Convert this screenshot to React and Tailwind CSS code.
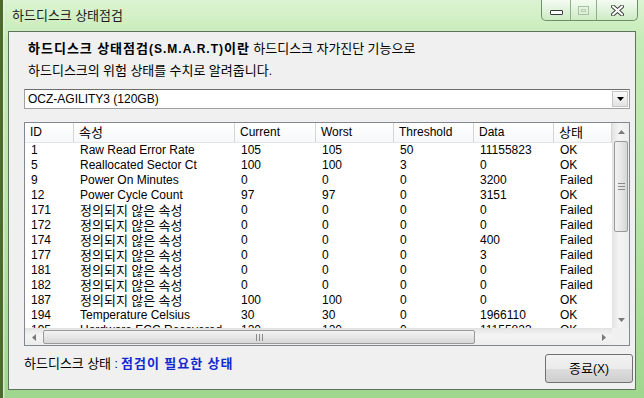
import React from 'react';

// hangul runs a size up, Noto CJK draws them smaller than Gulim does
const ko = (s) =>
    s.split(/([\uAC00-\uD7A3]+)/).map((p, i) =>
        /[\uAC00-\uD7A3]/.test(p) ? (
            <span key={i} className="text-[13px]">
                {p}
            </span>
        ) : (
            p
        )
    );

const columns = [
    { label: 'ID', w: 'w-[49px]' },
    { label: '속성', w: 'w-[161px]' },
    { label: 'Current', w: 'w-[81px]' },
    { label: 'Worst', w: 'w-[78px]' },
    { label: 'Threshold', w: 'w-[80px]' },
    { label: 'Data', w: 'w-[80px]' },
    { label: '상태', w: 'w-[58px]' },
];

const UNDEF = '정의되지 않은 속성';

const rows = [
    ['1', 'Raw Read Error Rate', '105', '105', '50', '11155823', 'OK'],
    ['5', 'Reallocated Sector Ct', '100', '100', '3', '0', 'OK'],
    ['9', 'Power On Minutes', '0', '0', '0', '3200', 'Failed'],
    ['12', 'Power Cycle Count', '97', '97', '0', '3151', 'OK'],
    ['171', UNDEF, '0', '0', '0', '0', 'Failed'],
    ['172', UNDEF, '0', '0', '0', '0', 'Failed'],
    ['174', UNDEF, '0', '0', '0', '400', 'Failed'],
    ['177', UNDEF, '0', '0', '0', '3', 'Failed'],
    ['181', UNDEF, '0', '0', '0', '0', 'Failed'],
    ['182', UNDEF, '0', '0', '0', '0', 'Failed'],
    ['187', UNDEF, '100', '100', '0', '0', 'OK'],
    ['194', 'Temperature Celsius', '30', '30', '0', '1966110', 'OK'],
    ['195', 'Hardware ECC Recovered', '120', '120', '0', '11155823', 'OK'],
];

function Arrow({ dir, className = '' }) {
    const pts = {
        up: '0,4 3.5,0 7,4',
        down: '0,0 7,0 3.5,4',
        left: '4,0 4,7 0,3.5',
        right: '0,0 0,7 4,3.5',
    }[dir];
    const vertical = dir === 'up' || dir === 'down';
    return (
        <svg
            width={vertical ? 7 : 4}
            height={vertical ? 4 : 7}
            className={className}
        >
            <polygon points={pts} fill="currentColor" />
        </svg>
    );
}

function TitleButtons() {
    return (
        <div className="flex h-[21px] -mr-[2px] rounded-b-[5px] border border-t-0 border-[#6f8f6a] bg-[linear-gradient(#f4fbf2,#cdebc4)] overflow-hidden">
            <div className="w-[29px] flex items-center justify-center border-r border-[#8fae8a]">
                <div className="w-[13px] h-[5px] mt-[4px] bg-white border border-[#3c3c3c] rounded-[1px]" />
            </div>
            <div className="w-[26px] flex items-center justify-center border-r border-[#8fae8a]">
                <div className="w-[11px] h-[9px] border border-[#a9bfa6] flex items-center justify-center">
                    <div className="w-[5px] h-[3px] border border-[#b9cdb6]" />
                </div>
            </div>
            <div className="w-[40px] flex items-center justify-center">
                <svg width="13" height="11" viewBox="0 0 13 11">
                    <path
                        d="M2 1.5 L11 9.5 M11 1.5 L2 9.5"
                        stroke="#3a3a3a"
                        strokeWidth="4"
                        strokeLinecap="round"
                    />
                    <path
                        d="M2 1.5 L11 9.5 M11 1.5 L2 9.5"
                        stroke="#ffffff"
                        strokeWidth="2.2"
                        strokeLinecap="round"
                    />
                </svg>
            </div>
        </div>
    );
}

function VScroll() {
    return (
        <div className="w-[17px] h-[205px] flex flex-col bg-[linear-gradient(90deg,#e6e6e6,#f4f4f4_40%,#ececec)] border-l border-[#e2e2e2]">
            <div className="h-[17px] flex items-center justify-center text-[#7a7a7a]">
                <Arrow dir="up" />
            </div>
            <div className="mt-[1px] mx-[1px] h-[91px] rounded-[2px] border border-[#9a9a9a] bg-[linear-gradient(90deg,#f3f3f3,#e6e6e6_50%,#d6d6d6)] flex items-center justify-center">
                <div className="flex flex-col gap-[2px]">
                    <div className="w-[7px] h-px bg-[#8a8a8a]" />
                    <div className="w-[7px] h-px bg-[#8a8a8a]" />
                    <div className="w-[7px] h-px bg-[#8a8a8a]" />
                </div>
            </div>
            <div className="flex-1" />
            <div className="h-[17px] flex items-center justify-center text-[#7a7a7a]">
                <Arrow dir="down" />
            </div>
        </div>
    );
}

function HScroll() {
    return (
        <div className="h-[17px] flex bg-[linear-gradient(#e6e6e6,#f4f4f4_40%,#ececec)] border-t border-[#e2e2e2]">
            <div className="w-[17px] flex items-center justify-center text-[#7a7a7a]">
                <Arrow dir="left" />
            </div>
            <div className="my-[1px] ml-[1px] w-[432px] rounded-[2px] border border-[#9a9a9a] bg-[linear-gradient(#f3f3f3,#e6e6e6_50%,#d6d6d6)] flex items-center justify-center">
                <div className="flex gap-[2px]">
                    <div className="w-px h-[7px] bg-[#8a8a8a]" />
                    <div className="w-px h-[7px] bg-[#8a8a8a]" />
                    <div className="w-px h-[7px] bg-[#8a8a8a]" />
                </div>
            </div>
            <div className="flex-1" />
            <div className="w-[17px] flex items-center justify-center text-[#7a7a7a]">
                <Arrow dir="right" />
            </div>
        </div>
    );
}

function SmartTable() {
    return (
        <div className="mt-[13px] border border-[#828790] bg-white flex">
            <div className="w-[587px] flex flex-col">
                <div className="h-[20px] flex bg-[linear-gradient(#ffffff,#f7f8fa)] border-b border-[#e5e5e5]">
                    {columns.map((c) => (
                        <div
                            key={c.label}
                            className={`${c.w} shrink-0 border-r border-[#d5d5d5] pl-[5px] flex items-center leading-[15px]`}
                        >
                            {ko(c.label)}
                        </div>
                    ))}
                </div>
                <div className="h-[185px] overflow-hidden">
                    {rows.map((r) => (
                        <div key={r[0]} className="h-[15px] flex items-center leading-[15px]">
                            {r.map((cell, i) => (
                                <div
                                    key={i}
                                    className={`${columns[i].w} shrink-0 pl-[6px] whitespace-nowrap overflow-hidden`}
                                >
                                    {ko(cell)}
                                </div>
                            ))}
                        </div>
                    ))}
                </div>
                <HScroll />
            </div>
            <div className="flex flex-col">
                <VScroll />
                <div className="h-[17px] bg-[#f0f0f0]" />
            </div>
        </div>
    );
}

export default function App() {
    return (
        <div className="w-[644px] h-[398px] flex flex-col px-[8px] pb-[8px] bg-[linear-gradient(90deg,#4d6a2c_0px,#4d6a2c_3px,#e8f5e2_3px,transparent_5px),linear-gradient(180deg,#dcf3d2_0%,#c4ecb6_10%,#b4e2a4_60%,#9fd68e_100%)] font-['Liberation_Sans','Noto_Sans_CJK_KR',sans-serif] text-[12px] text-black">
            {/* title bar */}
            <div className="h-[31px] flex items-start justify-between shrink-0">
                <div className="pl-[4px] pt-[7px] text-[12px] leading-[18px] text-[#1a1a1a]">
                    {ko('하드디스크 상태점검')}
                </div>
                <TitleButtons />
            </div>

            {/* client area */}
            <div className="flex-1 bg-[#f0f0f0] border border-[#5d735a] flex flex-col pl-[15px] pr-[5px] pt-[6px] pb-[6px]">
                <div className="pl-[4px] leading-[22px]">
                    <div>
                        <span className="font-bold tracking-[1px]">{ko('하드디스크 상태점검(S.M.A.R.T)이란')}</span>{' '}
                        {ko('하드디스크 자가진단 기능으로')}
                    </div>
                    <div>{ko('하드디스크의 위험 상태를 수치로 알려줍니다.')}</div>
                </div>

                <div className="mt-[7px] h-[20px] border border-[#a0a0a0] border-t-[#6d6d6d] bg-white flex items-center">
                    <div className="flex-1 pl-[3px]">OCZ-AGILITY3 (120GB)</div>
                    <div className="w-[16px] h-[16px] mr-[1px] border border-[#c5c5c5] bg-[linear-gradient(#fafafa,#e2e2e2)] flex items-center justify-center text-black">
                        <Arrow dir="down" />
                    </div>
                </div>

                <SmartTable />

                <div className="mt-[8px] flex items-start justify-between">
                    <div className="leading-[20px]">
                        {ko('하드디스크 상태 : ')}
                        <span className="font-bold tracking-[1px] text-[#1428d2]">{ko('점검이 필요한 상태')}</span>
                    </div>
                    <button
                        type="button"
                        className="w-[88px] h-[29px] mr-[-3px] rounded-[3px] border border-[#707070] bg-[linear-gradient(#f2f2f2_0%,#ebebeb_50%,#dddddd_51%,#cfcfcf_100%)] text-[12px] leading-[15px]"
                    >
                        {ko('종료(X)')}
                    </button>
                </div>
            </div>
        </div>
    );
}
